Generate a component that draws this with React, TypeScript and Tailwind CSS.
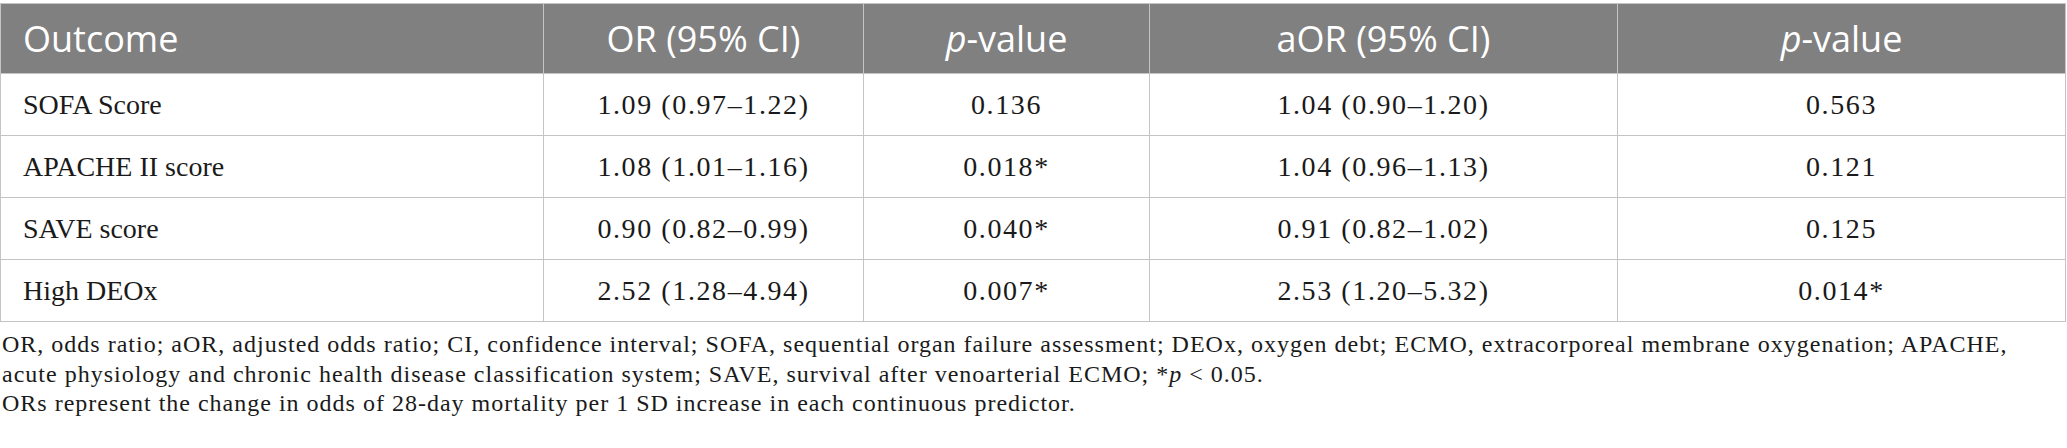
const rows = [
  { outcome: "SOFA Score", or: "1.09 (0.97–1.22)", p1: "0.136", aor: "1.04 (0.90–1.20)", p2: "0.563" },
  { outcome: "APACHE II score", or: "1.08 (1.01–1.16)", p1: "0.018*", aor: "1.04 (0.96–1.13)", p2: "0.121" },
  { outcome: "SAVE score", or: "0.90 (0.82–0.99)", p1: "0.040*", aor: "0.91 (0.82–1.02)", p2: "0.125" },
  { outcome: "High DEOx", or: "2.52 (1.28–4.94)", p1: "0.007*", aor: "2.53 (1.20–5.32)", p2: "0.014*" },
];

const serif = "font-['Liberation_Serif',serif]";
const cell = "border border-[#c4c4c4]";
const num = `${cell} text-center tracking-[1.6px]`;

export default function App() {
  return (
    <div className="w-[2067px] h-[448px] bg-white pt-[3px]">
      <table className="w-[2066px] border-collapse table-fixed">
        <colgroup>
          <col className="w-[543px]" />
          <col className="w-[320px]" />
          <col className="w-[286px]" />
          <col className="w-[468px]" />
          <col />
        </colgroup>
        <thead>
          <tr className="h-[70px] bg-[#808080] text-white font-['Open_Sans',sans-serif] text-[36px]">
            <th className={`${cell} text-left font-normal pl-[22px]`}>Outcome</th>
            <th className={`${cell} font-normal`}>OR (95% CI)</th>
            <th className={`${cell} font-normal`}>
              <span className="italic">p</span>-value
            </th>
            <th className={`${cell} font-normal`}>aOR (95% CI)</th>
            <th className={`${cell} font-normal`}>
              <span className="italic">p</span>-value
            </th>
          </tr>
        </thead>
        <tbody className={`${serif} text-[28px] text-[#1a1a1a]`}>
          {rows.map((r) => (
            <tr key={r.outcome} className="h-[62px]">
              <td className={`${cell} pl-[22px]`}>{r.outcome}</td>
              <td className={num}>{r.or}</td>
              <td className={num}>{r.p1}</td>
              <td className={num}>{r.aor}</td>
              <td className={num}>{r.p2}</td>
            </tr>
          ))}
        </tbody>
      </table>
      <div className={`${serif} text-[24px] leading-[29.5px] tracking-[1px] text-[#1a1a1a] pt-[8px] pl-[2px] whitespace-nowrap`}>
        <div>
          OR, odds ratio; aOR, adjusted odds ratio; CI, confidence interval; SOFA, sequential organ failure assessment; DEOx, oxygen debt; ECMO, extracorporeal membrane oxygenation; APACHE,
        </div>
        <div>
          acute physiology and chronic health disease classification system; SAVE, survival after venoarterial ECMO; *<span className="italic">p</span> &lt; 0.05.
        </div>
        <div>ORs represent the change in odds of 28-day mortality per 1 SD increase in each continuous predictor.</div>
      </div>
    </div>
  );
}
